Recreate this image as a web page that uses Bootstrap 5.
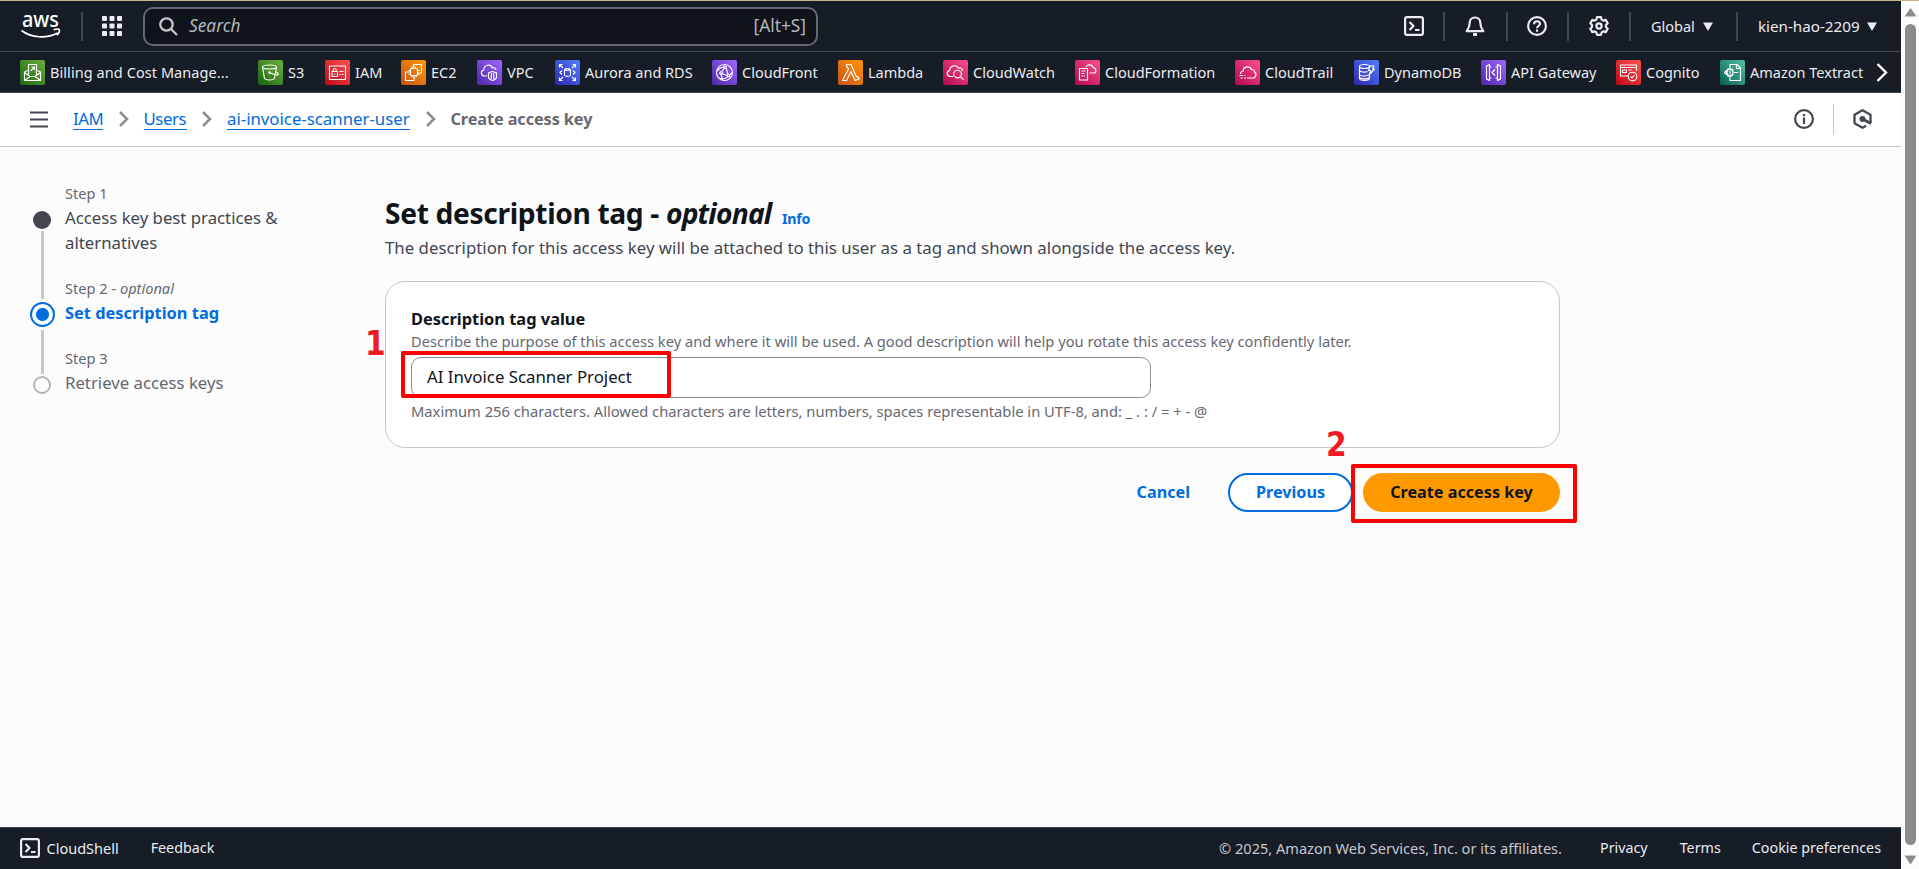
<!DOCTYPE html>
<html lang="en">
<head>
<meta charset="utf-8">
<meta name="viewport" content="width=device-width, initial-scale=1">
<title>Create access key | IAM | Global</title>
<link href="https://cdn.jsdelivr.net/npm/bootstrap@5.3.0/dist/css/bootstrap.min.css" rel="stylesheet">
<script src="https://cdn.jsdelivr.net/npm/bootstrap@5.3.0/dist/js/bootstrap.bundle.min.js"></script>
<style>
  body { height: 100vh; overflow: hidden; background: #fcfcfd; font-family: "Noto Sans", "Open Sans", sans-serif; font-size: 16.8px; line-height: 25px; color: #0f141a; border-top: 1px solid #c6b38b; }
  svg { display: block; flex: none; }
  .dark { background: #161d26; color: #ebebf0; font-size: 14.5px; line-height: 20px; }
  .topbar { height: 51px; border-bottom: 1px solid #424650; }
  .sep { width: 2px; height: 29px; background: #424650; flex: none; }
  .searchbox { width: 675px; height: 39px; margin-left: 21px; border: 2px solid #656871; border-radius: 10px; background: #0f141a; color: #b4b4bb; font-size: 17.3px; padding: 0 10px 1px 14px; }
  .cell { display: flex; align-items: center; justify-content: center; flex: none; }
  .w59 { width: 59px; padding-right: 2px; } .w60 { width: 60px; } .w61 { width: 61px; padding-right: 2px; }
  .first { padding-left: 2px; }
  .region { width: 105px; justify-content: flex-start; padding-left: 20px; gap: 8px; }
  .account { width: 163px; justify-content: flex-start; padding-left: 20px; gap: 7px; font-size: 15.2px; }
  .favs { height: 41px; padding: 0 13px 0 20px; border-bottom: 1px solid #424650; display: grid; align-items: center;
    grid-template-columns: 238px 67px 76px 76px 78px 157px 126px 105px 132px 160px 119px 127px 135px 104px 1fr auto; }
  .fav { display: flex; align-items: center; gap: 5px; white-space: nowrap; }
  .fav:first-child { letter-spacing: .07px; }
  .tile { width: 25px; height: 25px; border-radius: 2px; fill: none; stroke: #fff; stroke-width: 1.15; stroke-linejoin: round; }
  .green { background: linear-gradient(45deg, #1b660f, #6cae3e); }
  .red { background: linear-gradient(45deg, #bd0816, #ff5252); }
  .orange { background: linear-gradient(45deg, #c8511b, #f90); }
  .purple { background: linear-gradient(45deg, #4d27a8, #a166ff); }
  .blue { background: linear-gradient(45deg, #2e27ad, #527fff); }
  .pink { background: linear-gradient(45deg, #b0084d, #ff4f8b); }
  .teal { background: linear-gradient(45deg, #055f4e, #56c0a7); }
  .crumbs { height: 54px; background: #fff; border-bottom: 1px solid #c6c6cd; padding: 0 0 1px 30px; }
  .crumbs a { color: #006ce0; text-decoration: none; border-bottom: 1px solid #006ce0; line-height: 21px; }
  .crumbs .here { color: #656871; font-weight: 700; font-size: 16.3px; letter-spacing: -.1px; }
  .c-iam { width: 30px; letter-spacing: -.5px; margin-left: 25px; } .c-users { width: 43px; letter-spacing: -.4px; } .c-name { width: 183px; }
  .chev { margin: 0 15px 0 15.5px; }
  .stepper { padding: 34px 0 0 30px; width: 385px; gap: 10px; }
  .track { width: 25px; padding-top: 29.5px; margin-left: -.5px; margin-right: .5px; }
  .dot { width: 18px; height: 18px; border-radius: 50%; flex: none; }
  .dot.done { background: #424650; }
  .dot.todo { border: 2.5px solid #b4b4bb; background: #fff; }
  .dot.now { width: 25px; height: 25px; border: 2.5px solid #006ce0; background: radial-gradient(circle, #006ce0 6px, #fff 7px); }
  .rail { width: 3px; background: #c6c6cd; flex: none; }
  .steps { margin-top: -.5px; }
  .step { margin-bottom: 21px; color: #424650; font-size: 16.75px; }
  .step .no { font-size: 14.6px; line-height: 24px; color: #656871; }
  .step .cur { font-weight: 700; color: #006ce0; font-size: 16.4px; }
  .wizard { width: 1175px; padding-top: 46.5px; }
  .title-line { font-size: 28.2px; font-weight: 700; line-height: 38px; letter-spacing: -.35px; }
  .title-line em { letter-spacing: -.8px; }
  .info { color: #006ce0; font-size: 14.2px; font-weight: 700; margin-left: 10.5px; letter-spacing: -.2px; }
  .intro { color: #424650; font-size: 16.83px; margin: -2.5px 0 21px; }
  .panel { height: 167px; background: #fff; border: 1px solid #c6c6cd; border-radius: 20px; padding: 24px 25px; }
  .lbl { font-weight: 700; font-size: 16.4px; }
  .hint { color: #656871; font-size: 14.68px; line-height: 21px; white-space: nowrap; }
  .hint.limit { font-size: 14.72px; }
  .field { width: 740px; height: 41px; margin: 5px 0 3px; border: 1px solid #8c8c94; border-radius: 10px; padding: 6px 15px; background: #fff; }
  .mark-box { position: absolute; border: 4px solid #fe0000; border-radius: 2px; }
  .mark-no { position: absolute; color: #ed1c24; font: 700 33px/33px "DejaVu Sans Condensed", "DejaVu Sans", sans-serif; font-stretch: condensed; }
  .mb1 { left: -11px; top: -7px; width: 270px; height: 47px; }
  .mn1 { left: -47px; top: -31px; }
  .mb2 { left: -12px; top: -9px; width: 226px; height: 59px; }
  .mn2 { left: -37px; top: -45px; }
  .actions { margin-top: 25px; font-weight: 700; font-size: 16.2px; }
  .pill { height: 39px; border-radius: 20px; display: flex; align-items: center; justify-content: center; }
  .pill.prev { width: 125px; border: 2px solid #006ce0; color: #006ce0; background: #fff; margin: 0 10px 0 38px; }
  .pill.go { width: 197px; background: #f90; }
  .foot { height: 42px; border-top: 1px solid #424650; padding: 0 20px 1px; }
  .foot .copy { color: #c6c6cd; font-size: 14.57px; margin-right: 38px; }
  .foot .lnk { font-size: 14.3px; }
  .scroll { width: 18px; background: #fcfcfc; padding: 6px 0 4px; }
  .thumb { width: 11px; border-radius: 6px; background: #8b8b8b; margin: 7px 0 10px; }
</style>
</head>
<body class="d-flex">
<div class="d-flex flex-column flex-grow-1">
  <header class="dark">
    <div class="topbar d-flex align-items-center">
      <svg width="42" height="44" viewBox="0 -8 42 44" style="margin-left:20px"><text x="2" y="14.500" font-family="Noto Sans" font-weight="500" font-size="22" textLength="37" lengthAdjust="spacingAndGlyphs" fill="#fff">aws</text><path d="M1.500 18.500c10 7.500 25 8.300 36 2.500M33.500 17.800c3-.8 5.500-.7 5.800 0 .4 1.200-.7 3.700-2.300 5.500" fill="none" stroke="#fff" stroke-width="1.700"/></svg>
      <div class="sep" style="margin-left:19px"></div>
      <svg width="20" height="20" style="margin-left:19px" fill="#ebebf0"><g id="r"><rect width="5" height="5" rx=".8"/><rect x="7.500" width="5" height="5" rx=".8"/><rect x="15" width="5" height="5" rx=".8"/></g><use href="#r" y="7.500"/><use href="#r" y="15"/></svg>
      <div class="searchbox d-flex align-items-center">
        <svg width="19" height="19" viewBox="0 0 19 19" fill="none" stroke="#c6c6cd" stroke-width="2.300" style="margin-top:2px"><circle cx="7.500" cy="7.500" r="6.200"/><path d="M12 12l6 6"/></svg>
        <em class="ps-2 flex-grow-1" style="margin-left:3px">Search</em><span>[Alt+S]</span>
      </div>
      <div class="d-flex align-items-center ms-auto">
        <div class="cell w60 first"><svg width="20" height="20" viewBox="0 0 20 20" fill="none" stroke="#ebebf0" stroke-width="2.200" stroke-linejoin="round"><rect x="1.100" y="1.100" width="17.800" height="17.800" rx="2"/><path d="M5.500 6l4 4-4 4M11 14h4.500"/></svg></div>
        <div class="sep"></div>
        <div class="cell w61"><svg width="20" height="21" viewBox="0 0 20 21" fill="none" stroke="#ebebf0" stroke-width="2.200" stroke-linejoin="round"><path d="M10 1.500c-3.300 0-5.300 2.300-5.300 5.300 0 3.700-1 5.700-3 8.400h16.600c-2-2.700-3-4.700-3-8.400 0-3-2-5.300-5.300-5.300z"/><path d="M8 18.500h4" stroke-width="3"/></svg></div>
        <div class="sep"></div>
        <div class="cell w59"><svg width="20" height="20" viewBox="0 0 20 20" fill="none" stroke="#ebebf0" stroke-width="2.100"><circle cx="10" cy="10" r="8.900"/><path d="M7 8.200C7 4.200 13 4.300 13 7.800c0 2.200-3 2.200-3 4.500M10 13.600v2.100"/></svg></div>
        <div class="sep"></div>
        <div class="cell w60"><svg width="20" height="20" viewBox="0 0 20 20" fill="none" stroke="#ebebf0" stroke-width="2.200" stroke-linejoin="round"><path d="M8 1.200h4l.6 2.400 1.700 1 2.400-.7 2 3.400-1.700 1.700v2l1.700 1.700-2 3.400-2.400-.7-1.700 1-.6 2.400H8l-.6-2.400-1.700-1-2.400.7-2-3.400L3 11V9L1.300 7.300l2-3.400 2.400.7 1.700-1z"/><circle cx="10" cy="10" r="2.600"/></svg></div>
        <div class="sep"></div>
        <div class="cell region"><span>Global</span><svg width="10" height="9"><path d="M0 .5h10L5 9z" fill="#ebebf0"/></svg></div>
        <div class="sep"></div>
        <div class="cell account"><span>kien-hao-2209</span><svg width="10" height="9"><path d="M0 .5h10L5 9z" fill="#ebebf0"/></svg></div>
      </div>
    </div>
    <nav class="favs">
      <div class="fav"><svg class="tile green" viewBox="0 0 25 25"><path d="M4.500 12v8.500h16V12l-3-1.500M4.500 12l3-1.500M4.500 12.500l5.500 4h5l5.500-4M4.500 20.500l5.500-4M20.500 20.500l-5.500-4M8.500 15V4.500h8V15M10.500 11l4-4M11.500 7h3v3"/></svg><span>Billing and Cost Manage...</span></div>
      <div class="fav"><svg class="tile green" viewBox="0 0 25 25"><ellipse cx="11.500" cy="7" rx="7" ry="2"/><path d="M4.500 7l2 11.500c1.500 2 8.500 2 10 0l2-11.500M11.500 12.500c3 1.500 7.500 3 8.500 2s-1-2-2.500-2.800"/><circle cx="11.500" cy="12.500" r=".8"/></svg><span>S3</span></div>
      <div class="fav"><svg class="tile red" viewBox="0 0 25 25"><rect x="4.500" y="6" width="16" height="13.500"/><rect x="7" y="11.500" width="5.500" height="5"/><path d="M8.200 11.500V10c0-2 3-2 3 0v1.500M9.700 13.500v1.200M14.500 11.500h4M14.500 14.500h1.500M17 14.500h1.500"/></svg><span>IAM</span></div>
      <div class="fav"><svg class="tile orange" viewBox="0 0 25 25"><rect x="9.500" y="8.500" width="7" height="7" rx="1"/><path d="M12.500 8V4.500h8v8.500h-3.500M9 12H4.500v8.500h8.500V16M11 8V6.500M14.500 8V6.500M11 17.500V16M15 17.500V16M9 10.500H7.500M9 14H7.500M18.500 10.500H17M18.500 14.500H17"/></svg><span>EC2</span></div>
      <div class="fav"><svg class="tile purple" viewBox="0 0 25 25"><path d="M10 16H7.500c-3.500 0-4.500-5-.7-6 0-5.500 7-6.500 8.500-2 2-.8 3.500.3 3.700 2M15.500 11.500l4 1.300v4c0 2-2 3.200-4 3.700-2-.5-4-1.700-4-3.700v-4zM14.300 13v6M16.700 13v6"/></svg><span>VPC</span></div>
      <div class="fav"><svg class="tile blue" viewBox="0 0 25 25"><path d="M4.500 7.500v-3h3M17.500 4.500h3v3M20.500 17.500v3h-3M7.500 20.500h-3v-3M5 5l3 3M20 5l-3 3M20 20l-3-3M5 20l3-3M9.500 9.500v6c1 1.200 5 1.200 6 0v-6c-1-1.200-5-1.200-6 0 1 1 5 1 6 0M7 10.500l-2 2 2 2M18 10.500l2 2-2 2"/></svg><span>Aurora and RDS</span></div>
      <div class="fav"><svg class="tile purple" viewBox="0 0 25 25"><circle cx="12.500" cy="12.500" r="8"/><circle cx="13" cy="7" r="1.300"/><circle cx="9" cy="13" r="1.300"/><circle cx="16.500" cy="15.500" r="1.300"/><path d="M5 11l3.500-3L12 7M9.500 12l3-4M14 8l2 6M9 14l1.500 6M10 13.500l5 2M18 15l2-3M7 18c4 2 8 0 9-1.500"/></svg><span>CloudFront</span></div>
      <div class="fav"><svg class="tile orange" viewBox="0 0 25 25"><path d="M8.500 4.500h4.500l5.500 12.500 1.500-.5 1 2.500-4 1.500-4-9-4.500 9H4.500l6-11.500L9.500 7h-1z"/></svg><span>Lambda</span></div>
      <div class="fav"><svg class="tile pink" viewBox="0 0 25 25"><path d="M10 16.500H7.500c-4 0-4.500-5-.7-6 0-5.500 7-6 8.500-2.500 3-.8 4 1 4.200 3"/><circle cx="14.500" cy="14" r="3.800"/><path d="M17.300 16.700l3.200 3"/></svg><span>CloudWatch</span></div>
      <div class="fav"><svg class="tile pink" viewBox="0 0 25 25"><path d="M4.500 8.500h8v11.500h-8zM6.500 11h4M6.500 13.500h3M6.500 16h1.500M8.500 16h1.500M11 7c1-3 6-3 7 .5 4 .5 3.500 5.500.5 5.500h-4"/></svg><span>CloudFormation</span></div>
      <div class="fav"><svg class="tile pink" viewBox="0 0 25 25"><path d="M5.500 14c0-1.500 1-2.700 2.700-3 0-5 7-5.500 8.300-1.500 2.500-.3 3 1.500 3 2.500 2.500 1 1.500 6-1.500 6H12M4.500 15.500h3.500M5.500 18h2M9 18h2M9.500 15.500h1"/></svg><span>CloudTrail</span></div>
      <div class="fav"><svg class="tile blue" viewBox="0 0 25 25"><ellipse cx="10.500" cy="6.500" rx="5" ry="2"/><path d="M5.500 6.500v12c1 2.500 9 2.500 10 0v-5M5.500 10.500c1.500 2 6 2 8 1M5.500 14.500c1.500 2 6 2 9.500.5M5.500 17.500c2 1.700 7 1.700 9.500.5M16 6h4l-1.500 3h2l-5 5.500 1-4h-2z"/></svg><span>DynamoDB</span></div>
      <div class="fav"><svg class="tile purple" viewBox="0 0 25 25"><path d="M8.500 4.500v16l-3-1.500V6zM16.500 4.500v16l3-1.500V6zM8.500 7h2M8.500 18h2M14.500 7h2M14.500 18h2M14 9.500l-3 3 3 3"/></svg><span>API Gateway</span></div>
      <div class="fav"><svg class="tile red" viewBox="0 0 25 25"><path d="M12 16H4.500V5h16v6M4.500 7.500h16M6.500 10h4v2.500h-4zM12.500 10h3"/><circle cx="16.500" cy="16.500" r="4.300"/><path d="M14.500 16.500l1.500 1.500 2.500-3"/></svg><span>Cognito</span></div>
      <div class="fav"><svg class="tile teal" viewBox="0 0 25 25"><path d="M10 8V4.500h7l3.500 3.500v12.500H10V17M16.500 4.500V8.500h4"/><circle cx="10" cy="12.500" r="3"/><path d="M10 11v3M4.500 12.500l2-2v4zM14 12.500h4M7 9.500C8 8.500 12 8.500 13.500 10.500M7 15.500c2 1.200 5 1.200 6.500-1"/></svg><span>Amazon Textract</span></div>
      <svg width="12" height="19" fill="none" stroke="#fff" stroke-width="2.400"><path d="M1.500 1l8.500 8.500L1.500 18"/></svg>
    </nav>
  </header>

  <div class="crumbs d-flex align-items-center">
    <svg width="18" height="17" fill="none" stroke="#424650" stroke-width="2.200"><path d="M0 1.500h18M0 8.500h18M0 15.500h18"/></svg>
    <a class="c-iam" href="#">IAM</a>
    <svg class="chev" width="10" height="16" fill="none" stroke="#8c8c94" stroke-width="2.500"><path d="M1 1l7 7-7 7"/></svg>
    <a class="c-users" href="#">Users</a>
    <svg class="chev" width="10" height="16" fill="none" stroke="#8c8c94" stroke-width="2.500"><path d="M1 1l7 7-7 7"/></svg>
    <a class="c-name" href="#">ai-invoice-scanner-user</a>
    <svg class="chev" width="10" height="16" fill="none" stroke="#8c8c94" stroke-width="2.500"><path d="M1 1l7 7-7 7"/></svg>
    <span class="here">Create access key</span>
    <div class="d-flex align-items-center ms-auto" style="padding-right:29px">
      <svg width="20" height="20" viewBox="0 0 20 20" fill="none" stroke="#424650" stroke-width="2.200"><circle cx="10" cy="10" r="8.900"/><path d="M10 8.500v6.500M10 5v2.200"/></svg>
      <div style="width:1px;height:31px;background:#c6c6cd;margin:0 19px"></div>
      <svg width="19" height="20" viewBox="0 0 19 20" fill="none" stroke="#424650" stroke-width="2.300" stroke-linejoin="round"><path d="M13 16.800L9.500 18.800 1.500 14.300V5.700l8-4.500 8 4.500v8.600"/><circle cx="9.500" cy="10" r="3" fill="#424650" stroke="none"/><path d="M10 10.300l8 4.200" stroke-width="2.800"/></svg>
    </div>
  </div>

  <main class="d-flex flex-grow-1">
    <aside class="stepper d-flex">
      <div class="track d-flex flex-column align-items-center">
        <div class="dot done"></div><div class="rail" style="height:68px;margin:2px 0 3px"></div>
        <div class="dot now"></div><div class="rail" style="height:44px;margin:3px 0 2px"></div>
        <div class="dot todo"></div>
      </div>
      <div class="steps">
        <div class="step"><div class="no">Step 1</div><div>Access key best practices &amp;<br>alternatives</div></div>
        <div class="step"><div class="no">Step 2 - <em>optional</em></div><div class="cur">Set description tag</div></div>
        <div class="step"><div class="no">Step 3</div><div style="color:#656871">Retrieve access keys</div></div>
      </div>
    </aside>
    <section class="wizard">
      <h1 class="title-line m-0">Set description tag - <em>optional</em><span class="info">Info</span></h1>
      <p class="intro">The description for this access key will be attached to this user as a tag and shown alongside the access key.</p>
      <div class="panel">
        <div class="lbl">Description tag value</div>
        <div class="hint">Describe the purpose of this access key and where it will be used. A good description will help you rotate this access key confidently later.</div>
        <div class="field position-relative">AI Invoice Scanner Project<div class="mark-box mb1"></div><div class="mark-no mn1">1</div></div>
        <div class="hint limit">Maximum 256 characters. Allowed characters are letters, numbers, spaces representable in UTF-8, and: _ . : / = + - @</div>
      </div>
      <div class="actions d-flex align-items-center justify-content-end">
        <span style="color:#006ce0">Cancel</span>
        <div class="pill prev">Previous</div>
        <div class="pill go position-relative">Create access key<div class="mark-box mb2"></div><div class="mark-no mn2">2</div></div>
      </div>
    </section>
  </main>

  <footer class="dark foot d-flex align-items-center">
    <svg width="20" height="20" viewBox="0 0 20 20" fill="none" stroke="#ebebf0" stroke-width="2.200" stroke-linejoin="round"><rect x="1.100" y="1.100" width="17.800" height="17.800" rx="2"/><path d="M5.500 6l4 4-4 4M11 14h4.500"/></svg>
    <span style="margin:0 32px 0 6.500px">CloudShell</span><span class="lnk">Feedback</span>
    <span class="copy ms-auto">© 2025, Amazon Web Services, Inc. or its affiliates.</span>
    <span class="lnk" style="margin-right:32px">Privacy</span><span class="lnk" style="margin-right:31px">Terms</span><span class="lnk">Cookie preferences</span>
  </footer>
</div>
<div class="scroll d-flex flex-column align-items-center">
  <svg width="13" height="10"><path d="M6.500 1L12.500 9.500H.5z" fill="#8b8b8b"/></svg>
  <div class="thumb flex-grow-1"></div>
  <svg width="13" height="10"><path d="M.5.500h12L6.500 9.500z" fill="#8b8b8b"/></svg>
</div>
</body>
</html>
